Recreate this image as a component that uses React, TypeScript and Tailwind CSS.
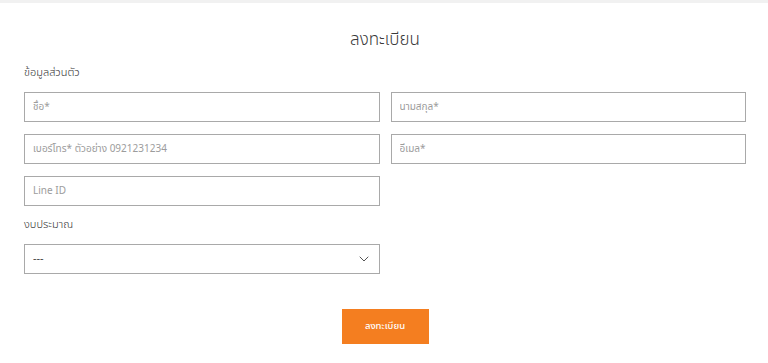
import { ChevronDown } from "lucide-react";

const inputClass =
  "h-[30px] w-full border border-[#a9a9a9] bg-white px-[8px] text-[10px] text-[#555] placeholder:text-[#9c9c9c] outline-none";

export default function App() {
  return (
    <div
      className="min-h-[363px] w-full bg-white"
      style={{ fontFamily: '"Noto Sans Thai", "Noto Sans", "Liberation Sans", sans-serif' }}
    >
      <div className="h-[3px] bg-[#f1f1f1]" />
      <div className="pl-[24px] pr-[22px]">
        <h1 className="pt-[25px] text-center text-[17px] font-light leading-[24px] text-[#3a3a3a]">
          ลงทะเบียน
        </h1>

        <p className="mt-[13px] h-[16px] text-[11px] font-light leading-[16px] text-[#333]">
          ข้อมูลส่วนตัว
        </p>

        {/* Personal info */}
        <div className="mt-[11px] grid grid-cols-2 gap-x-[11px] gap-y-[12px]">
          <input className={inputClass} placeholder="ชื่อ*" />
          <input className={inputClass} placeholder="นามสกุล*" />
          <input className={inputClass} placeholder="เบอร์โทร* ตัวอย่าง 0921231234" />
          <input className={inputClass} placeholder="อีเมล*" />
          <input className={inputClass} placeholder="Line ID" />
        </div>

        <p className="mt-[11px] h-[16px] text-[11px] font-light leading-[16px] text-[#333]">
          งบประมาณ
        </p>

        {/* Budget */}
        <div className="mt-[11px] grid grid-cols-2 gap-x-[11px]">
          <div className="relative">
            <select className="h-[30px] w-full appearance-none border border-[#a9a9a9] bg-white px-[8px] text-[11px] text-[#444] outline-none">
              <option>---</option>
            </select>
            <ChevronDown
              className="pointer-events-none absolute right-[8px] top-[7px] h-[16px] w-[16px] text-[#555]"
              strokeWidth={1.5}
            />
          </div>
        </div>

        <div className="mt-[35px] flex justify-center">
          <button className="h-[35px] w-[87px] bg-[#f47e20] text-[9.5px] font-medium text-white">
            ลงทะเบียน
          </button>
        </div>
      </div>
    </div>
  );
}
